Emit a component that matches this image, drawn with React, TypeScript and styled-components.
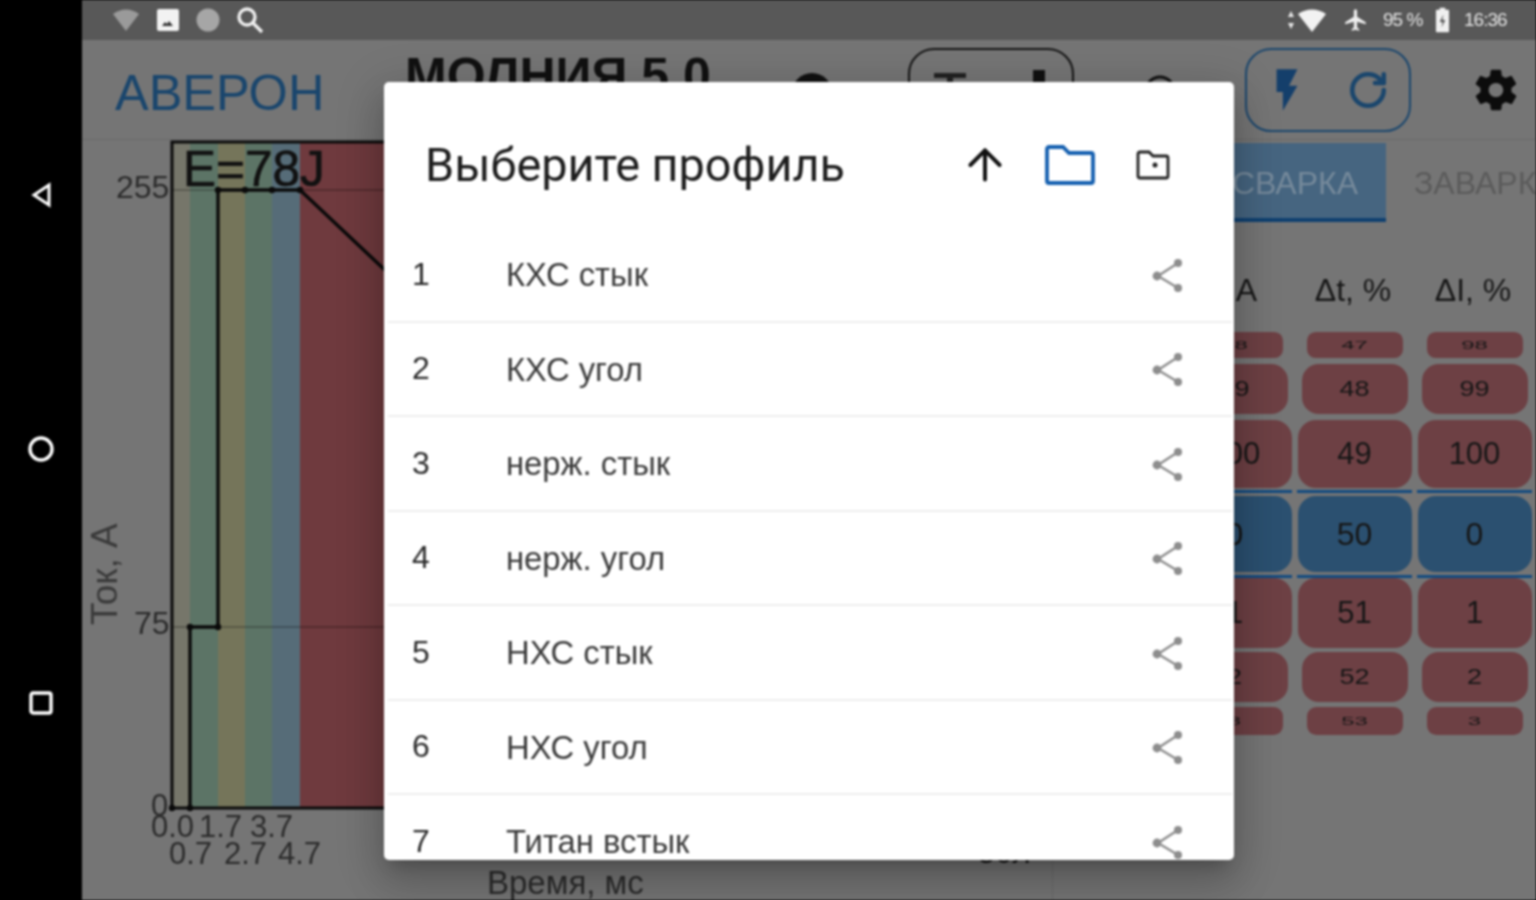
import React from "react";
import styled, { createGlobalStyle } from "styled-components";
import { ArrowUp, RotateCw } from "lucide-react";
import { IoMdSettings } from "react-icons/io";
import { MdFlashOn } from "react-icons/md";

const GlobalStyle = createGlobalStyle`
    html, body {
        margin: 0;
        padding: 0;
        width: 1536px;
        height: 900px;
        overflow: hidden;
        background: #000;
        font-family: "Liberation Sans", Arial, sans-serif;
    }
`;

const Screen = styled.div`
    position: relative;
    display: flex;
    width: 1536px;
    height: 900px;
    overflow: hidden;
    filter: blur(0.8px);
`;
const NavRail = styled.nav`
    width: 82px;
    flex: none;
    background: #000;
    display: flex;
    flex-direction: column;
    align-items: center;
    padding-top: 182px;
    gap: 226px;
    box-sizing: border-box;
`;
const Main = styled.div`
    flex: 1;
    display: flex;
    flex-direction: column;
    background: #757575;
    min-width: 0;
`;
const StatusBar = styled.div`
    height: 40px;
    flex: none;
    background: #585858;
    display: flex;
    align-items: center;
    justify-content: space-between;
    padding: 0 26px 0 30px;
    color: #e8e8e8;
`;
const StatusGroup = styled.div<{ $gap: number }>`
    display: flex;
    align-items: center;
    gap: ${(props) => props.$gap}px;
`;
const StatusText = styled.span<{ $width: number }>`
    font-size: 19px;
    letter-spacing: -1px;
    width: ${(props) => props.$width}px;
    white-space: nowrap;
    color: #e4e4e4;
`;
const Header = styled.header`
    height: 100px;
    flex: none;
    display: flex;
    align-items: flex-start;
    border-bottom: 1px solid #6a6a6a;
    box-sizing: border-box;
    padding-left: 33px;
    overflow: hidden;
`;
const Logo = styled.div`
    font-size: 50.5px;
    line-height: 50px;
    margin-top: 28px;
    color: #1a466d;
    width: 290px;
    flex: none;
`;
const DeviceTitle = styled.div`
    font-size: 50px;
    font-weight: 700;
    line-height: 50px;
    margin-top: 11px;
    color: #111;
    width: 385px;
    flex: none;
    white-space: nowrap;
`;
const HeaderIconSlot = styled.div<{ $width: number; $top: number }>`
    width: ${(props) => props.$width}px;
    margin-top: ${(props) => props.$top}px;
    flex: none;
    display: flex;
    color: #111;
`;
const PillButton = styled.div<{ $color: string; $width: number }>`
    width: ${(props) => props.$width}px;
    height: 84px;
    margin-top: 8px;
    padding: 0 20px;
    box-sizing: border-box;
    border: 2px solid ${(props) => props.$color};
    border-radius: 26px;
    display: flex;
    align-items: center;
    justify-content: space-between;
    flex: none;
    color: ${(props) => props.$color};
`;
const BoltIcon = styled(MdFlashOn)`
    margin-left: -5px;
    color: #143f6b;
`;
const Gear = styled.div`
    margin: 25px 0 0 60px;
    display: flex;
    color: #0c0c0c;
`;
const Body = styled.div`
    flex: 1;
    display: flex;
    min-height: 0;
`;
const ChartPane = styled.div`
    width: 971px;
    flex: none;
    border-right: 1px solid #6a6a6a;
    box-sizing: border-box;
`;
const ChartSvg = styled.svg`
    display: block;
    font-family: "Liberation Sans", Arial, sans-serif;
`;
const ControlPane = styled.div`
    flex: 1;
    padding-top: 3px;
    overflow: hidden;
`;
const Tabs = styled.div`
    display: flex;
    height: 79px;
`;
const Tab = styled.div<{ $active?: boolean; $width: number }>`
    width: ${(props) => props.$width}px;
    flex: none;
    box-sizing: border-box;
    display: flex;
    align-items: center;
    font-size: 32px;
    white-space: nowrap;
    padding: 5px 0 0 ${(props) => (props.$active ? 0 : 28)}px;
    justify-content: ${(props) => (props.$active ? "center" : "flex-start")};
    color: ${(props) => (props.$active ? "#768a9b" : "#5b5b5b")};
    background: ${(props) => (props.$active ? "#466580" : "transparent")};
    border-bottom: 4px solid ${(props) => (props.$active ? "#0f4070" : "transparent")};
`;
const ColumnLabels = styled.div`
    display: grid;
    grid-template-columns: repeat(4, 120px);
    height: 110px;
    box-sizing: border-box;
    padding-top: 46px;
`;
const ColumnLabel = styled.div`
    font-size: 32px;
    line-height: 44px;
    text-align: center;
    color: #161616;
`;
const WheelRow = styled.div<{ $top: number }>`
    display: grid;
    grid-template-columns: repeat(4, 120px);
    margin-top: ${(props) => props.$top}px;
`;
const WheelSlot = styled.div<{ $height: number; $selected?: boolean }>`
    height: ${(props) => props.$height}px;
    box-sizing: border-box;
    display: flex;
    align-items: center;
    justify-content: center;
    margin: 0 1px 0 4px;
    border-top: ${(props) => (props.$selected ? "3px solid #134b80" : "none")};
    border-bottom: ${(props) => (props.$selected ? "3px solid #134b80" : "none")};
`;
const WheelCell = styled.div<{ $width: number; $height: number; $size: number; $selected?: boolean }>`
    width: ${(props) => props.$width}px;
    height: ${(props) => props.$height}px;
    flex: none;
    display: flex;
    align-items: center;
    justify-content: center;
    font-size: ${(props) => props.$size}px;
    border-radius: ${(props) => Math.min(props.$height / 3, 18)}px;
    color: #161616;
    background: ${(props) => (props.$selected ? "#2b5070" : "#6d4044")};
`;
const WheelValue = styled.span<{ $squash: number }>`
    display: block;
    transform: scaleY(${(props) => props.$squash});
`;

const Dialog = styled.div`
    position: absolute;
    left: 384px;
    top: 82px;
    width: 850px;
    height: 778px;
    background: #fff;
    border-radius: 5px;
    overflow: hidden;
    display: flex;
    flex-direction: column;
    box-shadow: 0 11px 15px -7px rgba(0, 0, 0, 0.2), 0 24px 38px 3px rgba(0, 0, 0, 0.14), 0 9px 46px 8px rgba(0, 0, 0, 0.12);
`;
const DialogHeader = styled.div`
    height: 146px;
    flex: none;
    display: flex;
    align-items: center;
    padding: 20px 0 0 41px;
    box-sizing: border-box;
`;
const DialogTitle = styled.h2`
    margin: 0;
    flex: 1;
    font-family: Roboto, "Liberation Sans", sans-serif;
    font-weight: 400;
    font-size: 46.8px;
    color: #1d1d1d;
    white-space: nowrap;
`;
const DialogAction = styled.div<{ $width: number; $color: string }>`
    width: ${(props) => props.$width}px;
    display: flex;
    justify-content: center;
    color: ${(props) => props.$color};
`;
const ProfileList = styled.div`
    flex: 1;
    overflow: hidden;
`;
const ProfileRow = styled.div`
    height: 94.5px;
    box-sizing: border-box;
    display: flex;
    align-items: center;
    padding: 0 46px 0 24px;
    border-bottom: 2px solid #eeeeee;
    margin: 0 2px 0 4px;
`;
const ProfileNumber = styled.span`
    width: 94px;
    flex: none;
    font-size: 32px;
    color: #2a2a2a;
`;
const ProfileName = styled.span`
    flex: 1;
    font-size: 32.8px;
    padding-top: 2px;
    color: #3a3a3a;
`;
const ShareSlot = styled.div`
    display: flex;
    padding-top: 5px;
`;

function NavBack() {
    return (
        <svg width="24" height="26" viewBox="0 0 24 26" fill="none" stroke="#fff" strokeWidth="3">
            <path d="M20 3 5 13l15 10z" />
        </svg>
    );
}
function NavHome() {
    return (
        <svg width="30" height="30" viewBox="0 0 30 30" fill="none" stroke="#fff" strokeWidth="3.400">
            <circle cx="15" cy="15" r="11" />
        </svg>
    );
}
function NavRecent() {
    return (
        <svg width="26" height="26" viewBox="0 0 26 26" fill="none" stroke="#fff" strokeWidth="3.400">
            <rect x="3" y="3" width="20" height="20" rx="2" />
        </svg>
    );
}
function ShareIcon() {
    return (
        <svg width="36" height="38" viewBox="0 0 36 38" fill="none" stroke="#8d8d8d" strokeWidth="2.4">
            <path d="M28 5 8 18l20 12" />
            <g fill="#8d8d8d" stroke="none">
                <circle cx="28" cy="5" r="4" />
                <circle cx="7" cy="18" r="4.4" />
                <circle cx="28" cy="30" r="4" />
            </g>
        </svg>
    );
}

const profiles = ["КХС стык", "КХС угол", "нерж. стык", "нерж. угол", "НХС стык", "НХС угол", "Титан встык"];

const wheelRows = [
    { top: 0, slot: 26, width: 96, height: 26, size: 24, squash: 0.45, values: ["2.6", "98", "47", "98"] },
    { top: 6, slot: 50, width: 106, height: 50, size: 27, squash: 0.8, values: ["2.7", "99", "48", "99"] },
    { top: 6, slot: 68, width: 114, height: 68, size: 31, squash: 1, values: ["2.8", "100", "49", "100"] },
    { top: 2, slot: 88, width: 114, height: 76, size: 32, squash: 1, selected: true, values: ["3.0", "0", "50", "0"] },
    { top: 0, slot: 70, width: 114, height: 70, size: 31, squash: 1, values: ["3.2", "1", "51", "1"] },
    { top: 4, slot: 50, width: 106, height: 50, size: 27, squash: 0.8, values: ["3.4", "2", "52", "2"] },
    { top: 5, slot: 28, width: 96, height: 28, size: 24, squash: 0.45, values: ["3.6", "3", "53", "3"] },
];

const bands = [
    { x: 90, w: 18, fill: "#76766a" },
    { x: 108, w: 28, fill: "#5c7466" },
    { x: 136, w: 27, fill: "#75755a" },
    { x: 163, w: 27, fill: "#5c7466" },
    { x: 190, w: 28, fill: "#566c78" },
    { x: 218, w: 752, fill: "#6f3a3e" },
];
const dots = [[108, 487], [136, 487], [136, 50], [163, 50], [190, 50], [218, 50], [90, 668], [108, 668]];

function WeldChart() {
    return (
        <ChartSvg width="970" height="760" viewBox="0 0 970 760">
            {bands.map((b) => (
                <rect key={b.x} x={b.x} y={2} width={b.w} height={666} fill={b.fill} />
            ))}
            <path d="M90 50H970M90 487H970" stroke="#000" strokeOpacity=".3" strokeWidth="1.5" />
            <path d="M90 668V2H970M90 668H970" stroke="#0a0a0a" strokeWidth="3" fill="none" />
            <path d="M108 668V487H136V50H218L600 410" stroke="#0a0a0a" strokeWidth="3.400" fill="none" />
            {dots.map(([x, y]) => (
                <circle key={`${x}-${y}`} cx={x} cy={y} r="3.200" fill="#0a0a0a" />
            ))}
            <text x="101" y="46" fontSize="49.500" fill="#111" stroke="#111" strokeWidth=".7">E=78J</text>
            <g fontSize="31" fill="#2b2b2b">
                <text x="34" y="58" fontSize="32">255</text>
                <text x="52" y="494" fontSize="32">75</text>
                <text x="69" y="676">0</text>
                <text x="69" y="697">0.0</text>
                <text x="117" y="697">1.7</text>
                <text x="168" y="697">3.7</text>
                <text x="87" y="724">0.7</text>
                <text x="142" y="724">2.7</text>
                <text x="196" y="724">4.7</text>
                <text x="405" y="754" fontSize="33">Время, мс</text>
                <text x="896" y="723" fill="#111">50л</text>
                <text transform="translate(35 485) rotate(-90)" fontSize="37" fill="#3a3a3a">Ток, А</text>
            </g>
        </ChartSvg>
    );
}

export default function App() {
    return (
        <>
            <GlobalStyle />
            <Screen>
                <NavRail>
                    <NavBack />
                    <NavHome />
                    <NavRecent />
                </NavRail>
                <Main>
                    <StatusBar>
                        <StatusGroup $gap={16}>
                            <svg width="28" height="24" viewBox="0 0 28 24">
                                <path d="M1 6c8-6 18-6 26 0L14 23z" fill="#9a9a9a" />
                            </svg>
                            <svg width="24" height="24" viewBox="0 0 24 24">
                                <rect x="1" y="1" width="22" height="22" rx="2" fill="#f2f2f2" />
                                <path d="M6 18l3-4 2 2 2-3 4 5z" fill="#333" />
                            </svg>
                            <svg width="24" height="24" viewBox="0 0 24 24">
                                <circle cx="12" cy="12" r="11.500" fill="#a6a6a6" />
                            </svg>
                            <svg width="28" height="28" viewBox="0 0 28 28" fill="none" stroke="#efefef" strokeWidth="3.400">
                                <circle cx="11" cy="11" r="8" />
                                <path d="M17 17l9 9" />
                            </svg>
                        </StatusGroup>
                        <StatusGroup $gap={14}>
                            <svg width="43" height="26" viewBox="0 0 43 26">
                                <path d="M2 10l3-6 3 6zM2 16l3 6 3-6z" fill="#e8e8e8" />
                                <path d="M12 7c8-6 20-6 28 0L26 25z" fill="#f2f2f2" />
                            </svg>
                            <svg width="26" height="30" viewBox="0 0 24 24" fill="#efefef">
                                <path d="M21 16v-2l-8-5V3.500a1.500 1.500 0 0 0-3 0V9l-8 5v2l8-2.500V19l-2 1.500V22l3.500-1 3.500 1v-1.500L13 19v-5.500z" />
                            </svg>
                            <StatusText $width={38}>95 %</StatusText>
                            <svg width="15" height="26" viewBox="0 0 16 26">
                                <path d="M5 0h6v2h3a1 1 0 0 1 1 1v22a1 1 0 0 1-1 1H2a1 1 0 0 1-1-1V3a1 1 0 0 1 1-1h3z" fill="#f0f0f0" />
                                <path d="M9 7 5 15h3l-1 6 4-8H8z" fill="#555" />
                            </svg>
                            <StatusText $width={46}>16:36</StatusText>
                        </StatusGroup>
                    </StatusBar>
                    <Header>
                        <Logo>АВЕРОН</Logo>
                        <DeviceTitle>МОЛНИЯ 5.0</DeviceTitle>
                        <HeaderIconSlot $width={118} $top={33}>
                            <svg width="44" height="40" viewBox="0 0 44 40">
                                <path d="M2 20a20 20 0 0 1 40 0z" fill="#111" />
                            </svg>
                        </HeaderIconSlot>
                        <PillButton $color="#141414" $width={166}>
                            <svg width="40" height="50" viewBox="0 0 40 50">
                                <path d="M4 8h32v5H23v36h-6V13H4z" fill="#222" />
                            </svg>
                            <svg width="20" height="50" viewBox="0 0 20 50">
                                <rect x="1" y="5" width="12" height="40" fill="#111" />
                            </svg>
                        </PillButton>
                        <HeaderIconSlot $width={171} $top={31}>
                            <svg width="171" height="40" viewBox="0 0 171 40" fill="none" stroke="#111" strokeWidth="3">
                                <path d="M72 20a14 14 0 0 1 28 0" />
                            </svg>
                        </HeaderIconSlot>
                        <PillButton $color="#1a466d" $width={166}>
                            <BoltIcon size={50} />
                            <RotateCw size={42} strokeWidth={2.6} />
                        </PillButton>
                        <Gear>
                            <IoMdSettings size={50} />
                        </Gear>
                    </Header>
                    <Body>
                        <ChartPane>
                            <WeldChart />
                        </ChartPane>
                        <ControlPane>
                            <Tabs>
                                <Tab $width={151}>ГРАФИК</Tab>
                                <Tab $width={182} $active>СВАРКА</Tab>
                                <Tab $width={200}>ЗАВАРКА</Tab>
                            </Tabs>
                            <ColumnLabels>
                                <ColumnLabel>t, мс</ColumnLabel>
                                <ColumnLabel>I, А</ColumnLabel>
                                <ColumnLabel>Δt, %</ColumnLabel>
                                <ColumnLabel>ΔI, %</ColumnLabel>
                            </ColumnLabels>
                            {wheelRows.map((row) => (
                                <WheelRow key={row.values[2]} $top={row.top}>
                                    {row.values.map((value, i) => (
                                        <WheelSlot key={i} $height={row.slot} $selected={row.selected}>
                                            <WheelCell
                                                $width={row.width}
                                                $height={row.height}
                                                $size={row.size}
                                                $selected={row.selected}
                                            >
                                                <WheelValue $squash={row.squash}>{value}</WheelValue>
                                            </WheelCell>
                                        </WheelSlot>
                                    ))}
                                </WheelRow>
                            ))}
                        </ControlPane>
                    </Body>
                </Main>
                <Dialog>
                    <DialogHeader>
                        <DialogTitle>Выберите профиль</DialogTitle>
                        <DialogAction $width={68} $color="#111">
                            <ArrowUp size={50} strokeWidth={1.9} />
                        </DialogAction>
                        <DialogAction $width={102} $color="#1560b0">
                            <svg width="50" height="40" viewBox="0 0 50 40" fill="none" stroke="currentColor" strokeWidth="3.800">
                                <path d="M2 4a2 2 0 0 1 2-2h14l6 6h22a2 2 0 0 1 2 2v26a2 2 0 0 1-2 2H4a2 2 0 0 1-2-2z" />
                            </svg>
                        </DialogAction>
                        <DialogAction $width={64} $color="#222">
                            <svg width="34" height="30" viewBox="0 0 34 30" fill="none" stroke="currentColor" strokeWidth="2.800">
                                <path d="M2 4a2 2 0 0 1 2-2h9l4 4h13a2 2 0 0 1 2 2v18a2 2 0 0 1-2 2H4a2 2 0 0 1-2-2z" />
                                <circle cx="19" cy="15" r="2.500" fill="currentColor" stroke="none" />
                            </svg>
                        </DialogAction>
                        <DialogAction $width={49} $color="#222" />
                    </DialogHeader>
                    <ProfileList>
                        {profiles.map((name, i) => (
                            <ProfileRow key={name}>
                                <ProfileNumber>{i + 1}</ProfileNumber>
                                <ProfileName>{name}</ProfileName>
                                <ShareSlot>
                                    <ShareIcon />
                                </ShareSlot>
                            </ProfileRow>
                        ))}
                    </ProfileList>
                </Dialog>
            </Screen>
        </>
    );
}
